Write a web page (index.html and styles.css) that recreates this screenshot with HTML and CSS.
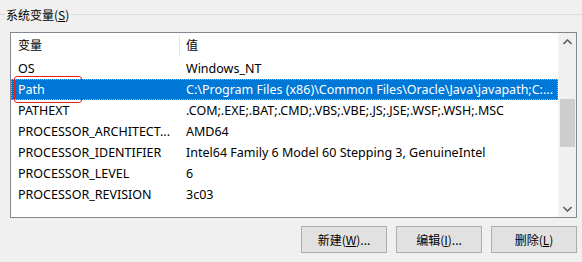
FILE: index.html
```html
<!DOCTYPE html>
<html lang="zh-CN">
<head>
<meta charset="utf-8">
<title>系统变量</title>
<link rel="stylesheet" href="styles.css">
</head>
<body>
<div class="group">
  <div class="group-head">
    <span class="line short"></span>
    <span class="group-label">系统变量(<u>S</u>)</span>
    <span class="line"></span>
  </div>
  <div class="listbox">
    <div class="list">
      <div class="row head">
        <div class="c1">变量</div>
        <div class="c2 sep">值</div>
      </div>
      <div class="row"><div class="c1">OS</div><div class="c2">Windows_NT</div></div>
      <div class="row sel"><div class="c1">Path</div><div class="c2">C:\Program Files (x86)\Common Files\Oracle\Java\javapath;C:...</div><span class="mark"></span></div>
      <div class="row"><div class="c1">PATHEXT</div><div class="c2">.COM;.EXE;.BAT;.CMD;.VBS;.VBE;.JS;.JSE;.WSF;.WSH;.MSC</div></div>
      <div class="row"><div class="c1">PROCESSOR_ARCHITECT...</div><div class="c2">AMD64</div></div>
      <div class="row"><div class="c1">PROCESSOR_IDENTIFIER</div><div class="c2">Intel64 Family 6 Model 60 Stepping 3, GenuineIntel</div></div>
      <div class="row"><div class="c1">PROCESSOR_LEVEL</div><div class="c2">6</div></div>
      <div class="row"><div class="c1">PROCESSOR_REVISION</div><div class="c2">3c03</div></div>
    </div>
    <div class="vscroll">
      <div class="sbtn">
        <svg width="9" height="6" viewBox="0 0 9 6"><path d="M0.5 5 L4.5 1 L8.5 5" fill="none" stroke="#606060" stroke-width="1.6"/></svg>
      </div>
      <div class="track"><div class="thumb"></div></div>
      <div class="sbtn">
        <svg width="9" height="6" viewBox="0 0 9 6"><path d="M0.5 1 L4.5 5 L8.5 1" fill="none" stroke="#606060" stroke-width="1.6"/></svg>
      </div>
    </div>
  </div>
  <div class="buttons">
    <button class="btn">新建(<u>W</u>)...</button>
    <button class="btn">编辑(<u>I</u>)...</button>
    <button class="btn">删除(<u>L</u>)</button>
  </div>
</div>
</body>
</html>
```
FILE: styles.css
```css
html, body {
  margin: 0;
  padding: 0;
  background: #f0f0f0;
}
body {
  width: 582px;
  height: 262px;
  overflow: hidden;
  font-family: "Noto Sans", "Noto Sans CJK SC", sans-serif;
  font-size: 12px;
  color: #000;
}
.group {
  padding-top: 6px;
}
.group-head {
  display: flex;
  align-items: center;
  height: 17px;
}
.line {
  flex: 1;
  height: 1px;
  background: #dcdcdc;
  margin-left: 2px;
}
.line.short {
  flex: 0 0 5px;
  margin-left: 0;
  margin-right: 1px;
}
.group-label {
  font-family: "Noto Sans CJK SC", sans-serif;
  font-size: 12px;
  line-height: 17px;
}
.group-label u {
  text-underline-offset: 1px;
}
.listbox {
  margin: 9px 0 0 10px;
  width: 565px;
  height: 184px;
  border: 1px solid #828790;
  background: #fff;
  display: flex;
}
.list {
  flex: 1;
  position: relative;
}
.row {
  display: grid;
  grid-template-columns: 168px 1fr;
  height: 21px;
  line-height: 22px;
  font-size: 12.5px;
  white-space: nowrap;
  position: relative;
}
.row.head {
  height: 25px;
  line-height: 24px;
  font-size: 12px;
  font-family: "Noto Sans CJK SC", sans-serif;
}
.c1 {
  padding-left: 7px;
  overflow: hidden;
}
.c2 {
  padding-left: 7px;
  overflow: hidden;
}
.sep {
  border-left: 1px solid #e5e5e5;
  padding-left: 6px;
  margin-top: 2px;
  height: 22px;
  line-height: 20px;
}
.row.sel {
  background: #0078d7;
  color: #fff;
  outline: 1px dotted #f4a040;
  outline-offset: -1px;
}
.mark {
  position: absolute;
  left: 3px;
  top: -3px;
  width: 66px;
  height: 25px;
  border: 1px solid #e0241c;
  border-radius: 3px;
}
.vscroll {
  width: 17px;
  flex: 0 0 17px;
  border-left: 1px solid #f4f4f4;
  background: #f0f0f0;
  display: flex;
  flex-direction: column;
}
.sbtn {
  height: 17px;
  display: flex;
  align-items: center;
  justify-content: center;
}
.track {
  flex: 1;
  padding-top: 49px;
}
.thumb {
  margin: 0 1px;
  height: 48px;
  background: #cdcdcd;
}
.buttons {
  display: flex;
  justify-content: flex-end;
  gap: 9px;
  margin: 8px 5px 0 0;
}
.btn {
  width: 86px;
  height: 27px;
  border: 1px solid #adadad;
  background: #e1e1e1;
  font-family: "Noto Sans CJK SC", sans-serif;
  font-size: 12px;
  color: #000;
  padding: 0;
}
```
